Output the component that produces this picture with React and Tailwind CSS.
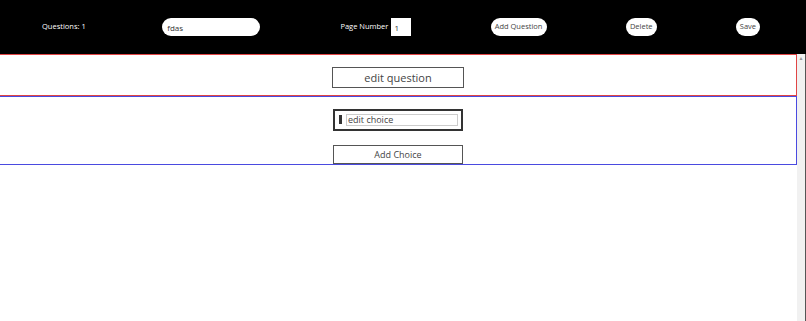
export default function App() {
  return (
    <div className="h-[321px] w-[806px] overflow-hidden bg-white font-['Open_Sans',sans-serif] flex flex-col">
      <div className="h-[54px] bg-black flex items-center justify-between pl-[42px] pr-[46px] text-white text-[8px]">
        <span className="w-[41px] whitespace-nowrap text-[7.5px]">Questions: 1</span>
        <input
          defaultValue="fdas"
          className="w-[98px] h-[18px] rounded-full bg-white text-[#333] text-[8px] pl-[5px] outline-none"
        />
        <div className="w-[72px] flex items-center justify-end gap-[3px]">
          <span className="whitespace-nowrap text-[7.5px]">Page Number</span>
          <input
            defaultValue="1"
            className="w-[20px] shrink-0 h-[18px] bg-white text-[#333] text-[8px] pl-[3px] outline-none"
          />
        </div>
        <button className="w-[56px] h-[18px] rounded-full bg-white text-[#444] text-[7.5px] whitespace-nowrap">Add Question</button>
        <button className="w-[31px] h-[18px] rounded-full bg-white text-[#444] text-[7.5px]">Delete</button>
        <button className="w-[24px] h-[18px] rounded-full bg-white text-[#444] text-[7.5px]">Save</button>
      </div>
      <div className="flex flex-1">
        <div className="w-[797px]">
          <div className="h-[42px] border border-l-0 border-[#e04545] flex justify-center pt-[12px]">
            <input
              defaultValue="edit question"
              className="w-[132px] h-[21px] border-[1.5px] border-[#555] text-center text-[11px] text-[#444] outline-none"
            />
          </div>
          <div className="h-[69px] border border-l-0 border-[#4a4ae0] flex flex-col items-center pt-[12px]">
            <div className="w-[130px] h-[22px] border-2 border-[#333] flex items-center pl-[4px] gap-[4px]">
              <div className="w-[3px] h-[9px] bg-[#333]"></div>
              <input
                defaultValue="edit choice"
                className="w-[112px] h-[12px] border border-[#ccc] text-[9px] text-[#444] pl-[1px] outline-none"
              />
            </div>
            <button className="mt-[14px] w-[130px] h-[20px] border border-[#555] text-[9px] text-[#444]">Add Choice</button>
          </div>
        </div>
        <div className="w-[9px] bg-[#f1f1f1] border-r border-[#555] flex justify-center pt-[2px]">
          <span className="text-[5px] text-[#999] leading-none">▲</span>
        </div>
      </div>
    </div>
  );
}
